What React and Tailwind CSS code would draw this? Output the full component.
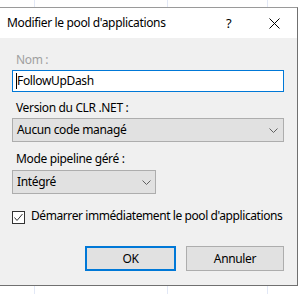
import React from "react";

const font = { fontFamily: '"Noto Sans", "Open Sans", sans-serif' };

function Chevron() {
  return (
    <svg width="9" height="5" viewBox="0 0 9 5" className="block">
      <path d="M0.5 0.5 L4.5 4.5 L8.5 0.5" fill="none" stroke="#606060" strokeWidth="1" />
    </svg>
  );
}

export default function App() {
  return (
    <div
      className="relative w-[299px] h-[294px] bg-white overflow-hidden text-[12px] leading-[16px] tracking-[-0.35px] whitespace-nowrap text-black"
      style={font}
    >
      <div className="absolute left-[34px] top-0 h-full w-px bg-[#e2e8f6]" />
      <div className="absolute left-[167px] top-0 h-full w-px bg-[#e2e8f6]" />
      <div className="absolute left-[267px] top-0 h-full w-px bg-[#e2e8f6]" />

      <div className="relative mt-[7px] w-[298px] h-[279px] flex flex-col border-t border-t-[#9a9a9a] border-r border-b border-r-[#707070] border-b-[#707070]">
        <div className="h-[30px] bg-white flex items-center pl-[7px]">
          <span className="flex-1">Modifier le pool d'applications</span>
          <span className="w-[8px] text-[13px] mr-[35px] text-black">?</span>
          <svg width="11" height="11" viewBox="0 0 11 11" className="mr-[17px]">
            <path d="M0.5 0.5 L10.5 10.5 M10.5 0.5 L0.5 10.5" stroke="#000" strokeWidth="1" />
          </svg>
        </div>

        <div className="flex-1 bg-[#f0f0f0] pl-[12px] pt-[14px] flex flex-col items-start">
          <div className="pl-[4px] text-[#a0a0a0]">Nom :</div>
          <div className="mt-[2px] w-[272px] h-[22px] border border-[#0078d7] bg-white flex items-center pl-[3px]">
            <span className="w-px h-[16px] bg-black" />
            <span>FollowUpDash</span>
          </div>

          <div className="mt-[8px] pl-[4px]">Version du CLR .NET :</div>
          <div className="mt-[2px] w-[272px] h-[24px] border border-[#adadad] bg-[#e1e1e1] flex items-center pl-[4px] pr-[5px]">
            <span className="flex-1">Aucun code managé</span>
            <Chevron />
          </div>

          <div className="mt-[9px] pl-[4px]">Mode pipeline géré :</div>
          <div className="mt-[3px] w-[144px] h-[24px] border border-[#adadad] bg-[#e1e1e1] flex items-center pl-[4px] pr-[4px]">
            <span className="flex-1">Intégré</span>
            <Chevron />
          </div>

          <div className="mt-[14px] flex items-start h-[16px]">
            <div className="mt-[3px] w-[13px] h-[13px] border border-[#333333] bg-white flex items-center justify-center">
              <svg width="11" height="11" viewBox="0 0 11 11">
                <path d="M1.5 5.5 L4 8.5 L9.5 2" fill="none" stroke="#333" strokeWidth="1" />
              </svg>
            </div>
            <span className="ml-[6px] tracking-[-0.42px]">Démarrer immédiatement le pool d'applications</span>
          </div>

          <div className="mt-[22px] flex pl-[73px]">
            <div className="w-[91px] h-[25px] border-2 border-[#0078d7] bg-[#e1e1e1] flex items-center justify-center">
              OK
            </div>
            <div className="ml-[10px] w-[98px] h-[25px] border border-[#adadad] bg-[#e1e1e1] flex items-center justify-center">
              Annuler
            </div>
          </div>
        </div>
      </div>
    </div>
  );
}
